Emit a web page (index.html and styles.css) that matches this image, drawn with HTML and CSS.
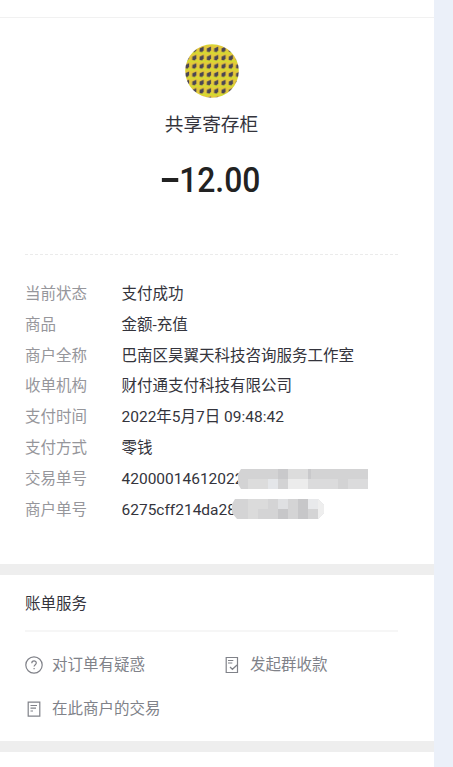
FILE: index.html
```html
<!DOCTYPE html>
<html lang="zh-CN">
  <head>
    <meta charset="UTF-8" />
    <meta name="viewport" content="width=device-width, initial-scale=1.0" />
    <title>账单详情</title>
    <link rel="stylesheet" href="styles.css">
  </head>
  <body>
    <div class="container">
      <div class="topbar"></div>
      <div class="bill">
        <div class="summary">
          <svg class="avatar" viewBox="0 0 54 54">
            <defs>
              <pattern id="cubes" x="5.8" y="1.2" width="7.3" height="8.3" patternUnits="userSpaceOnUse">
                <rect width="7.3" height="8.3" fill="#e5c83b" />
                <path d="M0 8.3 V7.6 L7.3 6 V8.3 Z M0 0 H4 L0 1.4 Z" fill="#d3dc30" />
                <path d="M1.5 3.2 L5.6 1.3 V4.8 L4.1 6.9 L1.5 6.4 Z" fill="#4b4653" />
              </pattern>
            </defs>
            <circle cx="27" cy="27" r="26.8" fill="url(#cubes)" />
          </svg>
          <div class="name">共享寄存柜</div>
          <div class="amount"><span class="minus"></span>12.00</div>
        </div>
        <div class="detail">
          <div class="row"><span class="label">当前状态</span><span>支付成功</span></div>
          <div class="row"><span class="label">商品</span><span>金额-充值</span></div>
          <div class="row"><span class="label">商户全称</span><span>巴南区昊翼天科技咨询服务工作室</span></div>
          <div class="row"><span class="label">收单机构</span><span>财付通支付科技有限公司</span></div>
          <div class="row"><span class="label">支付时间</span><span>2022年5月7日 09:48:42</span></div>
          <div class="row"><span class="label">支付方式</span><span>零钱</span></div>
          <div class="row">
            <span class="label">交易单号</span>
            <span class="number">42000014612022
              <svg class="mask mask1" viewBox="0 0 130 20">
                <path d="M3 0 H130 V20 H3 L0 15 V5 Z" fill="#d3d3d4" />
                <path d="M40 0h10v10h-10zM70 0h3v10h-3z" fill="#c9c9cb" />
                <path d="M50 0h20v10h-20zM10 10h20v10h-20z" fill="#dcdcdc" />
                <path d="M30 10h10v10h-10z" fill="#e4e6e9" />
                <path d="M50 10h20v10h-20z" fill="#ececec" />
                <path d="M70 10h30v10h-30zM110 10h20v10h-20z" fill="#dbdbdc" />
              </svg>
            </span>
          </div>
          <div class="row">
            <span class="label">商户单号</span>
            <span class="number">6275cff214da28
              <svg class="mask mask2" viewBox="0 0 92 20">
                <path d="M3 0 H86 L92 6 V14 L86 20 H5 L0 14 V5 Z" fill="#d4d4d5" />
                <path d="M16 0h10v20h-10zM26 0h10v10h-10z" fill="#dbdbdb" />
                <path d="M46 0h10v10h-10z" fill="#dfe0e2" />
                <path d="M46 10h10v10h-10zM66 0h10v20h-10z" fill="#c7c7c9" />
                <path d="M76 0h10l4 4v6h-14z" fill="#e8e9eb" />
                <path d="M86 0 L92 6 V14 L86 20 Z" fill="#eeeeee" />
              </svg>
            </span>
          </div>
        </div>
      </div>
      <div class="service">
        <h2>账单服务</h2>
        <div class="links">
          <div class="link">
            <svg class="icon" viewBox="0 0 18 18">
              <circle cx="9" cy="9" r="8.2" />
              <path d="M6.8 7.2 C6.8 4.2 11.3 4.3 11.3 7 C11.3 8.7 9.1 8.7 9.1 10.6 M9.1 11.9 V13.2" />
            </svg>
            <span>对订单有疑惑</span>
          </div>
          <div class="link">
            <svg class="icon" viewBox="0 0 18 18">
              <path d="M3.2 1.5 H14.5 V16.5 H3.2 Z M5 4.5 H10.3 M5 7 H9.3 M7 11 L9.4 13.3 L14 9" />
            </svg>
            <span>发起群收款</span>
          </div>
          <div class="link">
            <svg class="icon" viewBox="0 0 18 18">
              <path d="M3.2 2.2 H14.8 V16.2 H3.2 Z M5.5 5.5 H12 M5.5 8.2 H11 M5.5 11 H8" />
            </svg>
            <span>在此商户的交易</span>
          </div>
        </div>
      </div>
    </div>
  </body>
</html>
```

FILE: styles.css
```css
* {
  padding: 0;
  margin: 0;
  box-sizing: border-box;
}
body {
  height: 767px;
  overflow: hidden;
  background-color: #ebf0f9;
  font-family: Roboto, "Noto Sans CJK SC", sans-serif;
  font-size: 15.5px;
  color: #34343c;
}
.container {
  width: 434px;
  height: 767px;
  background-color: white;
}
.topbar {
  height: 18px;
  border-bottom: 1px solid #f1f1f1;
}
.bill {
  height: 546px;
  padding: 26px 36px 0 25px;
}
.summary {
  height: 211px;
  display: flex;
  flex-direction: column;
  align-items: center;
  border-bottom: 1px dashed #ebebeb;
}
.avatar {
  width: 54px;
  height: 54px;
}
.name {
  margin-top: 13px;
  font-size: 18.7px;
  line-height: 28px;
}
.amount {
  display: flex;
  align-items: center;
  margin-top: 8px;
  font-size: 35px;
  line-height: 68px;
  height: 68px;
  font-weight: 500;
  color: #222;
  transform: scaleX(0.91);
}
.minus {
  width: 18px;
  height: 4px;
  margin-right: 1px;
  margin-bottom: 2px;
  background-color: #222;
}
.detail {
  padding-top: 24px;
}
.row {
  display: flex;
  height: 30.8px;
  line-height: 30.8px;
  white-space: nowrap;
}
.label {
  width: 96.5px;
  color: #96969b;
}
.number {
  position: relative;
}
.mask {
  position: absolute;
  top: 5px;
  height: 20px;
}
.mask1 {
  left: 116.5px;
  width: 130px;
}
.mask2 {
  top: 4px;
  left: 110.5px;
  width: 92px;
}
.service {
  height: 188px;
  padding: 0 36px 0 25px;
  border-top: 11px solid #eee;
  border-bottom: 11px solid #eee;
}
.service h2 {
  height: 57px;
  line-height: 58px;
  font-size: 15.5px;
  font-weight: 400;
  border-bottom: 2px solid #f6f6f6;
}
.links {
  display: grid;
  grid-template-columns: 198px 1fr;
  grid-auto-rows: 44px;
  padding-top: 11px;
}
.link {
  display: flex;
  align-items: center;
  gap: 9px;
  color: #808289;
}
.link span {
  padding-bottom: 5px;
}
.icon {
  width: 18px;
  height: 18px;
  fill: none;
  stroke: #808289;
  stroke-width: 1.2;
}
```
